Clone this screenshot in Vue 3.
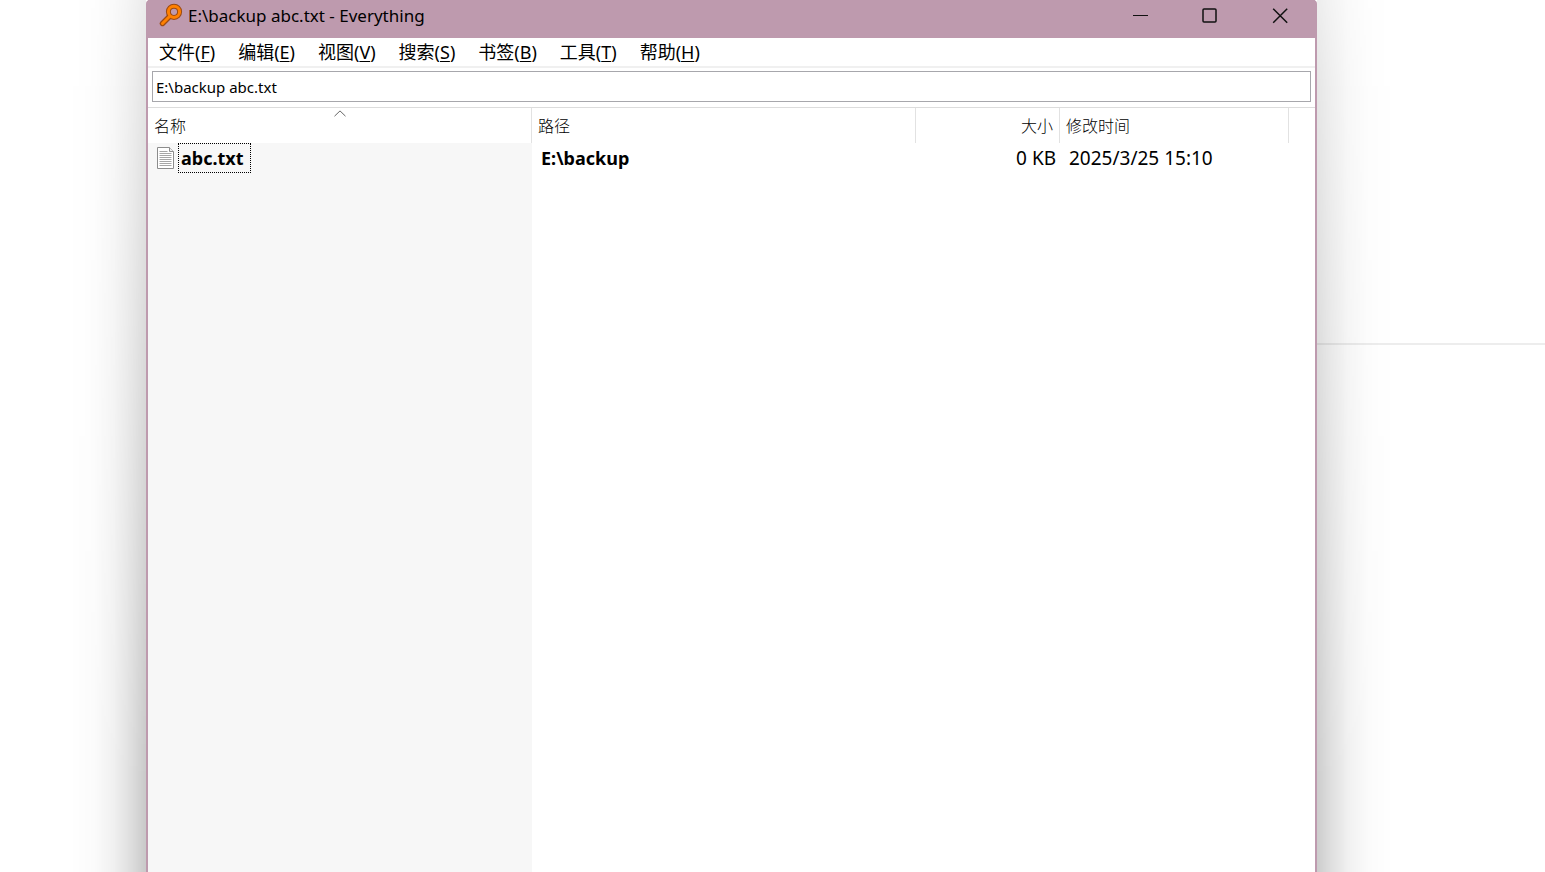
<script setup>
import { ref } from 'vue'

const query = ref('E:\\backup abc.txt')

const menus = [
  { label: '文件', key: 'F' },
  { label: '编辑', key: 'E' },
  { label: '视图', key: 'V' },
  { label: '搜索', key: 'S' },
  { label: '书签', key: 'B' },
  { label: '工具', key: 'T' },
  { label: '帮助', key: 'H' },
]

const columns = [
  { id: 'name', label: '名称', sorted: true },
  { id: 'path', label: '路径' },
  { id: 'size', label: '大小' },
  { id: 'date', label: '修改时间' },
]

const files = [
  { name: 'abc.txt', path: 'E:\\backup', size: '0 KB', date: '2025/3/25 15:10' },
]
</script>

<template>
  <div class="desktop">
    <div class="side left"><div class="shade"></div></div>
    <main class="window">
      <header class="titlebar">
        <svg class="logo" width="24" height="24" viewBox="0 0 24 24" aria-hidden="true">
          <path d="M10.5 13.5 3.5 20.5" stroke="#9c4a12" stroke-width="5.4" stroke-linecap="round" />
          <circle cx="15" cy="8.8" r="5.6" fill="none" stroke="#9c4a12" stroke-width="5" />
          <path d="M10.5 13.5 3.5 20.5" stroke="#ff8000" stroke-width="3" stroke-linecap="round" />
          <circle cx="15" cy="8.8" r="5.6" fill="none" stroke="#ff8000" stroke-width="3" />
        </svg>
        <h1>{{ query }} - Everything</h1>
        <div class="controls">
          <button type="button" aria-label="最小化">
            <svg width="16" height="16" viewBox="0 0 16 16"><path d="M1 7.5h15" /></svg>
          </button>
          <button type="button" aria-label="最大化">
            <svg width="16" height="16" viewBox="0 0 16 16"><rect x="1" y="1" width="13" height="13" rx="1" class="thick" /></svg>
          </button>
          <button type="button" aria-label="关闭">
            <svg width="16" height="16" viewBox="0 0 16 16"><path class="thick" d="M1.2.7l14 14M15.2.7l-14 14" /></svg>
          </button>
        </div>
      </header>
      <nav class="menubar">
        <button v-for="m in menus" :key="m.key" type="button">{{ m.label }}(<u>{{ m.key }}</u>)</button>
      </nav>
      <div class="search">
        <input v-model="query" type="text" aria-label="搜索" spellcheck="false" />
      </div>
      <div class="results">
        <table>
          <colgroup>
            <col class="w-name" /><col class="w-path" /><col class="w-size" /><col class="w-date" /><col />
          </colgroup>
          <thead>
            <tr>
              <th v-for="c in columns" :key="c.id" :class="c.id" scope="col">
                <button type="button">{{ c.label }}</button>
                <svg v-if="c.sorted" class="sort" width="12" height="7" viewBox="0 0 12 7" aria-hidden="true">
                  <path d="M.5 6.2 6 .9l5.5 5.3" />
                </svg>
              </th>
              <td></td>
            </tr>
          </thead>
          <tbody>
            <tr v-for="f in files" :key="f.name">
              <td class="name">
                <div class="file">
                  <svg width="18" height="22" viewBox="0 0 18 22" aria-hidden="true">
                    <path d="M.5.5h12l4 4v17H.5z" fill="#fff" stroke="#8c8c8c" />
                    <path d="M12.5.5v4h4" fill="#eee" stroke="#8c8c8c" />
                    <path d="M2.5 4.5h8M2.5 6.5h12M2.5 8.5h12M2.5 10.5h12M2.5 12.5h12M2.5 14.5h12M2.5 16.5h12M2.5 18.5h12" stroke="#a6a6a6" />
                  </svg>
                  <span class="focus">{{ f.name }}</span>
                </div>
              </td>
              <td class="path">{{ f.path }}</td>
              <td class="size">{{ f.size }}</td>
              <td class="date">{{ f.date }}</td>
              <td></td>
            </tr>
          </tbody>
        </table>
      </div>
    </main>
    <div class="side right"><div class="shade"></div><hr /></div>
  </div>
</template>

<style>
body {
  margin: 0;
  background: #fff;
}
</style>

<style scoped>
.desktop {
  display: grid;
  grid-template-columns: 146fr 1171fr 228fr;
  min-height: 100vh;
  overflow: hidden;
  font-family: "Noto Sans", "Noto Sans CJK SC", sans-serif;
  color: #000;
}
button {
  padding: 0;
  border: 0;
  background: none;
  color: inherit;
  font: inherit;
}
.side {
  display: grid;
}
.side > * {
  grid-area: 1 / 1;
}
.shade {
  width: 76px;
  mask-image: linear-gradient(rgba(0, 0, 0, 0.36), rgba(0, 0, 0, 0.5) 10%, #000 90%);
}
.left .shade {
  justify-self: end;
  background: linear-gradient(to left, rgba(0, 0, 0, 0.21), rgba(0, 0, 0, 0.13) 20%, rgba(0, 0, 0, 0.06) 42%, rgba(0, 0, 0, 0.016) 68%, transparent);
}
.right .shade {
  background: linear-gradient(to right, rgba(0, 0, 0, 0.2), rgba(0, 0, 0, 0.12) 20%, rgba(0, 0, 0, 0.055) 42%, rgba(0, 0, 0, 0.015) 68%, transparent);
}
hr {
  align-self: start;
  width: 100%;
  height: 2px;
  margin: 343px 0 0;
  border: 0;
  background: rgba(0, 0, 0, 0.07);
}
.window {
  display: flex;
  flex-direction: column;
  min-width: 0;
  border: solid #be9aae;
  border-width: 0 2px;
  border-radius: 4px 4px 0 0;
  background: #fff;
}
.titlebar {
  display: flex;
  height: 38px;
  padding: 0 0 0 11px;
  background: #be9aae;
}
.logo {
  margin-top: 3px;
}
h1 {
  flex: 1;
  margin: 0 0 0 5px;
  font-size: 17px;
  font-weight: 400;
  line-height: 32px;
}
.controls {
  display: flex;
}
.controls button {
  display: grid;
  place-items: center;
  width: 70px;
  height: 32px;
}
.controls path,
.controls rect {
  fill: none;
  stroke: #111;
}
.controls .thick {
  stroke-width: 1.5;
}
.menubar {
  display: flex;
  gap: 23px;
  height: 28px;
  padding: 0 11px;
  border-bottom: 2px solid #f0f0f0;
}
.menubar button {
  font-size: 18px;
  line-height: 28px;
}
u {
  text-underline-offset: 2px;
}
.search {
  padding: 3px 4px 5px;
  border-bottom: 1px solid #dcdcdc;
}
input {
  display: block;
  box-sizing: border-box;
  width: 100%;
  height: 31px;
  padding: 0 3px;
  border: 1px solid #a7a7ac;
  outline: 0;
  background: #fff;
  color: #000;
  font-family: "Noto Sans", sans-serif;
  font-size: 15px;
}
.results {
  flex: 1;
  background: linear-gradient(#f7f7f7, #f7f7f7) 0 0 / 384px 100% no-repeat;
}
table {
  width: 100%;
  table-layout: fixed;
  border-collapse: separate;
  border-spacing: 0;
}
.w-name,
.w-path {
  width: 384px;
}
.w-size {
  width: 144px;
}
.w-date {
  width: 229px;
}
th,
td {
  box-sizing: border-box;
  padding: 0;
  text-align: left;
}
thead {
  background: #fff;
}
th {
  position: relative;
  height: 35px;
  padding: 0 6px;
  border-right: 1px solid #e2e2e2;
  font-family: "Noto Sans CJK SC", sans-serif;
  font-size: 16px;
  font-weight: 300;
  line-height: 35px;
}
th button {
  display: block;
  width: 100%;
  text-align: inherit;
}
.sort {
  position: absolute;
  top: 2px;
  left: calc(50% - 6px);
}
.sort path {
  fill: none;
  stroke: #666;
}
th.size,
td.size {
  text-align: right;
}
tbody td {
  height: 30px;
  font-size: 19px;
  line-height: 30px;
}
.file {
  display: flex;
  align-items: center;
  gap: 3px;
  padding-left: 9px;
}
.focus {
  padding: 0 6px 0 2px;
  border: 1px dotted #000;
  line-height: 28px;
}
td.name,
td.path {
  font-size: 18px;
  font-weight: 700;
}
td.path,
td.date {
  padding-left: 9px;
}
td.size {
  padding-right: 4px;
}
</style>
